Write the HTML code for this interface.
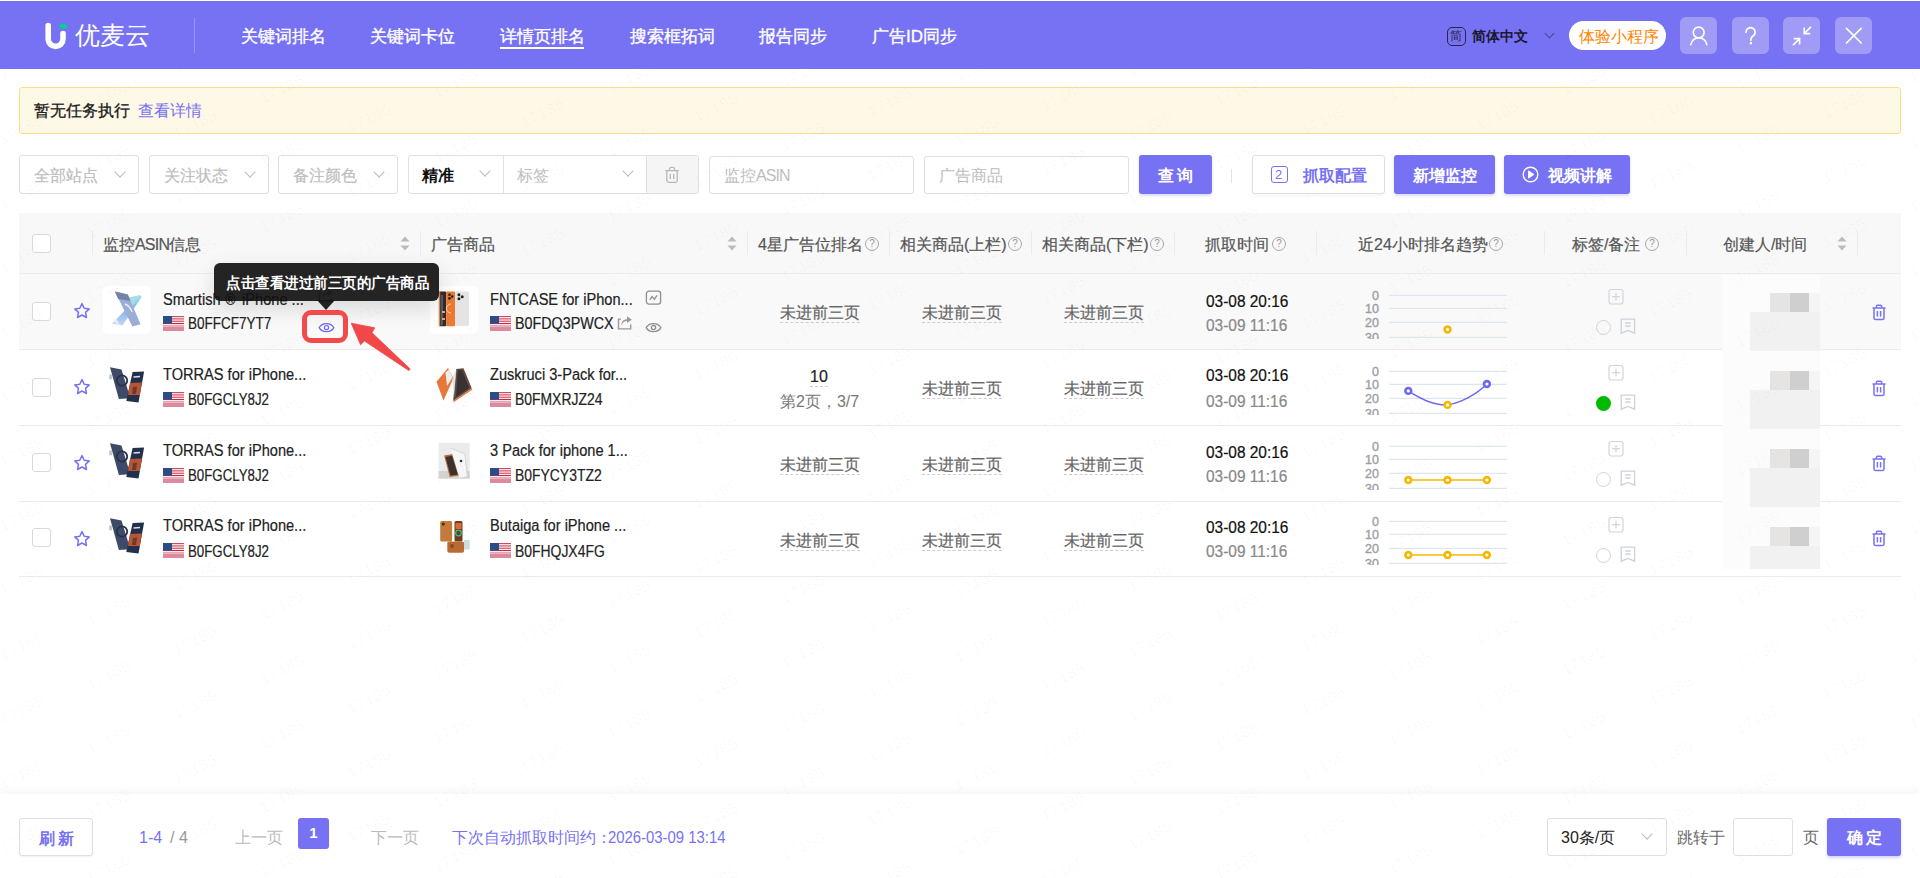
<!DOCTYPE html>
<html><head><meta charset="utf-8">
<style>
*{box-sizing:border-box;margin:0;padding:0}
html,body{width:1920px;height:878px;overflow:hidden;background:#fff}
body{position:relative;font-family:"Liberation Sans",sans-serif;color:#222}
.a{position:absolute;white-space:nowrap}
.rt,.sku,.nt,.d1,.d2,.th,.sel .t{-webkit-text-stroke:0.2px currentColor}
.hdr{position:absolute;left:0;top:1px;width:1920px;height:68px;background:#7772f3}
.nav{position:absolute;top:27px;font-size:17px;line-height:20px;color:#fff;-webkit-text-stroke:0.35px #fff}
.hbtn{position:absolute;top:17px;width:37px;height:37px;border-radius:6px;background:rgba(255,255,255,.3)}
.sel{position:absolute;top:155px;height:39px;border:1px solid #dedee3;border-radius:3px;background:#fff}
.sel .t{position:absolute;left:14px;top:10px;font-size:16px;line-height:20px;color:#bdbdbd}
.chev{position:absolute;width:8px;height:8px;border-right:1px solid #b8bcc4;border-bottom:1px solid #b8bcc4;transform:rotate(45deg)}
.btnp{position:absolute;top:155px;height:39px;background:#7772f3;border-radius:3px;color:#fff;font-size:16px;line-height:20px;font-weight:500}

.th{position:absolute;top:235px;font-size:16px;line-height:20px;color:#555}
.vd{position:absolute;top:231px;width:1px;height:24px;background:#ebebeb}
.q{position:absolute;top:237px;width:14px;height:14px;border:1px solid #a8a8a8;border-radius:50%;font-size:10px;line-height:12px;text-align:center;color:#999;font-family:"Liberation Sans",sans-serif}
.cb{position:absolute;left:32px;width:19px;height:19px;border:1px solid #d9d9d9;border-radius:3px;background:#fff}
.rt{position:absolute;font-size:16px;line-height:20px;color:#222}
.sku{position:absolute;font-size:16px;line-height:20px;color:#222}
.nt{position:absolute;font-size:16px;line-height:18px;color:#666;border-bottom:1px dashed #d8c8d0;padding-bottom:0}
.d1{position:absolute;left:1206px;font-size:16px;line-height:20px;color:#111;transform:scaleX(.965);transform-origin:0 0}
.d2{position:absolute;left:1206px;font-size:16px;line-height:20px;color:#888;transform:scaleX(.965);transform-origin:0 0}
.thumb{position:absolute;width:48px;height:48px;border-radius:5px;background:#fff;overflow:hidden}
</style></head><body>

<!-- HEADER -->
<div class="hdr"></div>
<svg class="a" style="left:40px;top:18px" width="32" height="34" viewBox="0 0 32 34">
  <path d="M8.2 7.5 V21 a7.4 7.4 0 0 0 14.8 0 V15.5" fill="none" stroke="#fff" stroke-width="5.6" stroke-linecap="round"/>
  <path d="M19.2 9.2 a4 3.6 0 0 1 8 0 q0 1.4 -1.4 1.4 h-5.2 q-1.4 0 -1.4 -1.4z" fill="#00d09c"/>
</svg>
<div class="a" style="left:75px;top:20px;font-size:25px;line-height:30px;color:#fff">优麦云</div>
<div class="a" style="left:194px;top:18px;width:1px;height:35px;background:rgba(255,255,255,.25)"></div>
<div class="nav a" style="left:241px">关键词排名</div>
<div class="nav a" style="left:370px">关键词卡位</div>
<div class="nav a" style="left:500px">详情页排名</div>
<div class="a" style="left:500px;top:47px;width:84px;height:2px;background:#fff"></div>
<div class="nav a" style="left:630px">搜索框拓词</div>
<div class="nav a" style="left:759px">报告同步</div>
<div class="nav a" style="left:872px">广告ID同步</div>

<div class="a" style="left:1447px;top:27px;width:19px;height:19px;border:1.5px solid #2a2840;border-radius:5px"></div>
<div class="a" style="left:1450px;top:29px;font-size:12px;line-height:14px;color:#2a2840">简</div>
<div class="a" style="left:1472px;top:27px;font-size:14px;line-height:18px;color:#1a1830;font-weight:700">简体中文</div>
<div class="chev" style="left:1546px;top:30px;width:7px;height:7px;border-color:#4a4690"></div>
<div class="a" style="left:1569px;top:21px;width:97px;height:29px;border-radius:15px;background:#fff"></div>
<div class="a" style="left:1579px;top:27px;font-size:15.6px;line-height:20px;color:#ff8400">体验小程序</div>
<div class="hbtn" style="left:1680px"></div>
<div class="hbtn" style="left:1732px"></div>
<div class="hbtn" style="left:1783px"></div>
<div class="hbtn" style="left:1835px"></div>


<svg class="a" style="left:1680px;top:17px" width="37" height="37" viewBox="0 0 37 37" fill="none" stroke="#fff" stroke-width="1.6" stroke-linecap="round">
  <circle cx="18.7" cy="15.5" r="5.4"/><path d="M10.8 27.6 a8.1 8.1 0 0 1 16 0"/>
</svg>
<svg class="a" style="left:1732px;top:17px" width="37" height="37" viewBox="0 0 37 37" fill="none" stroke="#fff" stroke-width="1.7" stroke-linecap="round">
  <path d="M14 15.2 a4.6 4.6 0 1 1 7 3.9 c-1.5 0.9 -2.1 1.8 -2.1 3.3 v0.9"/><rect x="17.8" y="25" width="2.2" height="2.2" fill="#fff" stroke="none"/>
</svg>
<svg class="a" style="left:1783px;top:17px" width="37" height="37" viewBox="0 0 37 37" fill="none" stroke="#fff" stroke-width="1.6" stroke-linecap="square">
  <path d="M27.4 10.4 L21.2 16.6 M21.2 11.4 V16.6 H26.4"/>
  <path d="M10.6 27.6 L16.6 21.6 M11.6 21.6 H16.6 V26.6"/>
</svg>
<svg class="a" style="left:1835px;top:17px" width="37" height="37" viewBox="0 0 37 37" fill="none" stroke="#fff" stroke-width="1.7" stroke-linecap="round">
  <path d="M11.5 11.3 L26.2 26 M26.2 11.3 L11.5 26"/>
</svg>

<!-- NOTICE -->
<div class="a" style="left:19px;top:87px;width:1882px;height:47px;background:#fef8e6;border:1px solid #fbde88;border-radius:3px"></div>
<div class="a" style="left:34px;top:101px;font-size:16px;line-height:20px;color:#1a1a1a;-webkit-text-stroke:0.3px #1a1a1a">暂无任务执行</div>
<div class="a" style="left:138px;top:101px;font-size:16px;line-height:20px;color:#7772f3">查看详情</div>

<!-- FILTERS -->
<div class="sel" style="left:19px;width:120px"><span class="t">全部站点</span><i class="chev" style="left:96px;top:12px"></i></div>
<div class="sel" style="left:149px;width:120px"><span class="t">关注状态</span><i class="chev" style="left:96px;top:12px"></i></div>
<div class="sel" style="left:278px;width:120px"><span class="t">备注颜色</span><i class="chev" style="left:96px;top:12px"></i></div>


<div class="a" style="left:408px;top:155px;width:291px;height:39px;border:1px solid #dedee3;border-radius:3px;background:#fff;overflow:hidden">
  <div class="a" style="left:237px;top:0;width:53px;height:37px;background:#f5f5f5;border-left:1px solid #dedee3"></div>
  <div class="a" style="left:94px;top:0;width:1px;height:37px;background:#dedee3"></div>
</div>
<div class="a" style="left:422px;top:166px;font-size:16px;line-height:20px;color:#111;font-weight:700">精准</div>
<i class="chev" style="left:481px;top:167px"></i>
<div class="a" style="left:517px;top:166px;font-size:16px;line-height:20px;color:#bdbdbd">标签</div>
<i class="chev" style="left:624px;top:167px"></i>
<svg class="a" style="left:663px;top:166px" width="18" height="18" viewBox="0 0 18 18" fill="none" stroke="#b4b8bf" stroke-width="1.3">
  <path d="M2.2 4.6 H15.8 M6.5 4.4 V3 a1.6 1.6 0 0 1 1.6 -1.6 h1.8 a1.6 1.6 0 0 1 1.6 1.6 V4.4 M3.8 4.8 V14.6 a1.8 1.8 0 0 0 1.8 1.8 h6.8 a1.8 1.8 0 0 0 1.8 -1.8 V4.8 M7.3 8 V13 M10.7 8 V13"/>
</svg>
<div class="a" style="left:709px;top:156px;width:205px;height:38px;border:1px solid #dedee3;border-radius:3px;background:#fff"></div>
<div class="a" style="left:724px;top:166px;font-size:16px;line-height:20px;color:#bdbdbd">监控<span style="letter-spacing:-0.9px">ASIN</span></div>
<div class="a" style="left:924px;top:156px;width:205px;height:38px;border:1px solid #dedee3;border-radius:3px;background:#fff"></div>
<div class="a" style="left:939px;top:166px;font-size:16px;line-height:20px;color:#bdbdbd">广告商品</div>
<div class="btnp a" style="left:1139px;width:73px;box-shadow:0 2px 3px rgba(119,114,243,.25)"></div>
<div class="a" style="left:1158px;top:166px;font-size:16px;line-height:20px;color:#fff;font-weight:700;letter-spacing:3px">查询</div>
<div class="a" style="left:1231px;top:169px;width:1px;height:14px;background:#e4e4e4"></div>
<div class="a" style="left:1252px;top:155px;width:133px;height:39px;border:1px solid #dedee3;border-radius:3px;background:#fff;box-shadow:0 2px 3px rgba(0,0,0,.04)"></div>
<div class="a" style="left:1271px;top:166px;width:17px;height:17px;border:1.3px solid #7772f3;border-radius:3px"></div>
<div class="a" style="left:1275px;top:166px;font-size:13px;line-height:17px;color:#7772f3">2</div>
<div class="a" style="left:1303px;top:166px;font-size:16px;line-height:20px;color:#7772f3;font-weight:700">抓取配置</div>
<div class="btnp a" style="left:1394px;width:101px;box-shadow:0 2px 3px rgba(119,114,243,.25)"></div>
<div class="a" style="left:1413px;top:166px;font-size:16px;line-height:20px;color:#fff;font-weight:700">新增监控</div>
<div class="btnp a" style="left:1504px;width:126px;box-shadow:0 2px 3px rgba(119,114,243,.25)"></div>
<svg class="a" style="left:1522px;top:166px" width="17" height="17" viewBox="0 0 17 17" fill="none" stroke="#fff" stroke-width="1.4">
  <circle cx="8.5" cy="8.5" r="7.3"/><path d="M6.7 5.3 L11.4 8.5 L6.7 11.7 Z" fill="#fff" stroke-linejoin="round"/>
</svg>
<div class="a" style="left:1548px;top:166px;font-size:16px;line-height:20px;color:#fff;font-weight:700">视频讲解</div>


<!-- TABLE HEADER -->
<div class="a" style="left:19px;top:213px;width:1882px;height:61px;background:#f8f8f8;border-bottom:1px solid #ececec"></div>
<div class="cb" style="top:234px"></div>
<div class="vd" style="left:92px"></div>
<div class="th" style="left:103px">监控<span style="letter-spacing:-0.8px">ASIN</span>信息</div>
<svg class="a" style="left:400px;top:236px" width="10" height="15" viewBox="0 0 10 15" fill="#bbb"><path d="M5 0.5 L9.5 5.5 H0.5Z M5 14.5 L9.5 9.5 H0.5Z"/></svg>
<div class="vd" style="left:420px"></div>
<div class="th" style="left:431px">广告商品</div>
<svg class="a" style="left:727px;top:236px" width="10" height="15" viewBox="0 0 10 15" fill="#bbb"><path d="M5 0.5 L9.5 5.5 H0.5Z M5 14.5 L9.5 9.5 H0.5Z"/></svg>
<div class="vd" style="left:747px"></div>
<div class="th" style="left:758px">4星广告位排名</div><div class="q" style="left:865px">?</div>
<div class="vd" style="left:889px"></div>
<div class="th" style="left:900px">相关商品(上栏)</div><div class="q" style="left:1008px">?</div>
<div class="vd" style="left:1031px"></div>
<div class="th" style="left:1042px">相关商品(下栏)</div><div class="q" style="left:1150px">?</div>
<div class="vd" style="left:1174px"></div>
<div class="th" style="left:1205px">抓取时间</div><div class="q" style="left:1272px">?</div>
<div class="vd" style="left:1316px"></div>
<div class="th" style="left:1358px">近24小时排名趋势</div><div class="q" style="left:1489px">?</div>
<div class="vd" style="left:1544px"></div>
<div class="th" style="left:1572px">标签/备注</div><div class="q" style="left:1645px">?</div>
<div class="vd" style="left:1686px"></div>
<div class="th" style="left:1723px">创建人/时间</div>
<svg class="a" style="left:1837px;top:236px" width="10" height="15" viewBox="0 0 10 15" fill="#bbb"><path d="M5 0.5 L9.5 5.5 H0.5Z M5 14.5 L9.5 9.5 H0.5Z"/></svg>
<div class="vd" style="left:1857px"></div>

<!-- ROWS -->
<div class="a" style="left:19px;top:274px;width:1882px;height:75px;background:#f9f9f9"></div>
<div class="a" style="left:19px;top:349px;width:1882px;height:1px;background:#ebebeb"></div>
<div class="cb" style="top:302px"></div>
<svg class="a" style="left:73px;top:302px" width="18" height="18" viewBox="0 0 18 18"><path d="M9 1.6 L11.2 6.3 L16.3 6.9 L12.5 10.4 L13.5 15.5 L9 13 L4.5 15.5 L5.5 10.4 L1.7 6.9 L6.8 6.3 Z" fill="none" stroke="#7772f3" stroke-width="1.5" stroke-linejoin="round"/></svg>
<div class="thumb" style="left:103px;top:286px"></div>
<svg class="a" style="left:103px;top:285px" width="48" height="48" viewBox="0 0 48 48"><defs><linearGradient id="gb" x1="0" y1="0" x2="0" y2="1"><stop offset="0" stop-color="#9fe0e8"/><stop offset=".5" stop-color="#7fb4ec"/><stop offset="1" stop-color="#c8d6f0"/></linearGradient></defs>
        <path d="M37 9.9 L38.6 12 L19.5 40.5 L9.2 38.5 Z" fill="url(#gb)"/><path d="M37 9.9 L26.1 12.5 L20 22 L30 20Z" fill="#a6dde6"/>
        <path d="M11.9 6.6 L24.8 9.5 L37.6 39.3 L29.4 41.6 Z" fill="#9cadd6"/><path d="M11.9 6.6 L24.8 9.5 L27.5 16 L15.2 14 Z" fill="#7283a6"/>
        <path d="M22 19 q5 2 7 8" stroke="#e8eefa" stroke-width="1.4" fill="none"/><path d="M10.5 37 L13 33 L17 40Z" fill="#e6ecf8"/></svg>
<div class="rt" style="left:163px;top:290px;transform:scaleX(.912);transform-origin:0 0">Smartish<span style="display:inline-block;font-size:13px;transform:scale(1.15,1.2) translate(1px,-1px);margin:0 9px 0 5px">®</span>iPhone ...</div>
<svg class="a" style="left:163px;top:316px" width="21" height="15" viewBox="0 0 21 15"><rect width="21" height="15" fill="#fff"/><rect y="0" width="21" height="1.2" fill="#d04a60"/><rect y="2.3" width="21" height="1.2" fill="#d04a60"/><rect y="4.6" width="21" height="1.2" fill="#d04a60"/><rect y="6.9" width="21" height="1.2" fill="#c8283e"/><rect y="9.2" width="21" height="1.2" fill="#e090a0"/><rect y="10.6" width="21" height="4.4" fill="#dc8a9e"/><rect width="9" height="7.6" fill="#2a4d88"/></svg>
<div class="sku" style="left:188px;top:314px;transform:scaleX(0.844);transform-origin:0 0">B0FFCF7YT7</div>
<div class="thumb" style="left:430px;top:286px"></div>
<svg class="a" style="left:430px;top:285px" width="48" height="48" viewBox="0 0 48 48"><rect x="8.9" y="6.6" width="7.3" height="34.7" rx="1" fill="#3a2a22"/><rect x="8.9" y="6.6" width="1.3" height="34.7" fill="#e08a4a"/><rect x="11" y="10" width="2" height="30" fill="#4a8ad0" opacity=".55"/>
        <rect x="12" y="26" width="3" height="2" fill="#e8a070"/><rect x="12" y="33" width="3" height="2" fill="#e8a070"/>
        <rect x="16.2" y="6.6" width="8.9" height="34.7" rx="1" fill="#ec7a30"/><circle cx="19.5" cy="9.8" r="1.3" fill="#222"/><circle cx="22.2" cy="11.6" r="1.3" fill="#222"/><circle cx="19.5" cy="13.4" r="1.3" fill="#222"/>
        <path d="M21 19 a4 4 0 0 0 0 9" stroke="#fbe2d0" stroke-width="0.9" fill="none"/>
        <rect x="25.1" y="6.6" width="13.9" height="34.5" rx="1.5" fill="#e4e4e4"/><circle cx="28.9" cy="9.8" r="1.5" fill="#222"/><circle cx="32.2" cy="11.8" r="1.5" fill="#222"/><circle cx="28.9" cy="13.8" r="1.5" fill="#222"/></svg>
<div class="rt" style="left:490px;top:290px;transform:scaleX(.912);transform-origin:0 0">FNTCASE for iPhon...</div>
<svg class="a" style="left:490px;top:316px" width="21" height="15" viewBox="0 0 21 15"><rect width="21" height="15" fill="#fff"/><rect y="0" width="21" height="1.2" fill="#d04a60"/><rect y="2.3" width="21" height="1.2" fill="#d04a60"/><rect y="4.6" width="21" height="1.2" fill="#d04a60"/><rect y="6.9" width="21" height="1.2" fill="#c8283e"/><rect y="9.2" width="21" height="1.2" fill="#e090a0"/><rect y="10.6" width="21" height="4.4" fill="#dc8a9e"/><rect width="9" height="7.6" fill="#2a4d88"/></svg>
<div class="sku" style="left:515px;top:314px;transform:scaleX(0.894);transform-origin:0 0">B0FDQ3PWCX</div>
<div class="nt" style="left:780px;top:304px">未进前三页</div>
<div class="nt" style="left:922px;top:304px">未进前三页</div>
<div class="nt" style="left:1064px;top:304px">未进前三页</div>
<div class="d1" style="top:292px">03-08 20:16</div>
<div class="d2" style="top:316px">03-09 11:16</div>
<svg class="a" style="left:1360px;top:287px" width="150" height="51.5" viewBox="0 0 150 51.5"><line x1="29" y1="8.3" x2="147" y2="8.3" stroke="#e0e6f1" stroke-width="1.2"/><text x="19" y="12.5" text-anchor="end" font-size="12.5" font-family="Liberation Sans" fill="#9aa0a6" stroke="#9aa0a6" stroke-width="0.35">0</text><line x1="29" y1="21.3" x2="147" y2="21.3" stroke="#e0e6f1" stroke-width="1.2"/><text x="19" y="25.5" text-anchor="end" font-size="12.5" font-family="Liberation Sans" fill="#9aa0a6" stroke="#9aa0a6" stroke-width="0.35">10</text><line x1="29" y1="35.3" x2="147" y2="35.3" stroke="#e0e6f1" stroke-width="1.2"/><text x="19" y="39.5" text-anchor="end" font-size="12.5" font-family="Liberation Sans" fill="#9aa0a6" stroke="#9aa0a6" stroke-width="0.35">20</text><line x1="29" y1="50.3" x2="147" y2="50.3" stroke="#e0e6f1" stroke-width="1.2"/><text x="19" y="54.5" text-anchor="end" font-size="12.5" font-family="Liberation Sans" fill="#9aa0a6" stroke="#9aa0a6" stroke-width="0.35">30</text><circle cx="87.5" cy="42.5" r="2.9" fill="#fff" stroke="#f5b800" stroke-width="2.6"/></svg>
<svg class="a" style="left:1608px;top:288px" width="16" height="17" viewBox="0 0 16 17" fill="none" stroke="#d0d4db" stroke-width="1.2"><rect x="1" y="1.5" width="14" height="14.5" rx="2.5"/><path d="M8 5 V12.5 M4.2 8.7 H11.8"/></svg>
<div class="a" style="left:1596px;top:320px;width:15px;height:15px;border-radius:50%;border:1.6px solid #d0d4db"></div>
<svg class="a" style="left:1620px;top:318px" width="16" height="17" viewBox="0 0 16 17" fill="none" stroke="#cdd1d9" stroke-width="1.3"><path d="M1.2 1.2 H14.6 V15.2 L7.9 12.5 L1.2 15.2 Z M5.2 5 H10.6 M5.2 8 H10.6"/></svg>
<svg class="a" style="left:1871px;top:304px" width="16" height="17" viewBox="0 0 16 17" fill="none" stroke="#7772f3" stroke-width="1.5"><path d="M1.5 4 H14.5 M5.4 3.8 V2.4 a1.1 1.1 0 0 1 1.1 -1.1 h3 a1.1 1.1 0 0 1 1.1 1.1 V3.8 M3 4.2 V14 a1.6 1.6 0 0 0 1.6 1.6 h6.8 a1.6 1.6 0 0 0 1.6 -1.6 V4.2 M6.4 7 V12.6 M9.6 7 V12.6"/></svg>
<div class="a" style="left:19px;top:425px;width:1882px;height:1px;background:#ebebeb"></div>
<div class="cb" style="top:378px"></div>
<svg class="a" style="left:73px;top:378px" width="18" height="18" viewBox="0 0 18 18"><path d="M9 1.6 L11.2 6.3 L16.3 6.9 L12.5 10.4 L13.5 15.5 L9 13 L4.5 15.5 L5.5 10.4 L1.7 6.9 L6.8 6.3 Z" fill="none" stroke="#7772f3" stroke-width="1.5" stroke-linejoin="round"/></svg>
<div class="thumb" style="left:103px;top:362px"></div>
<svg class="a" style="left:103px;top:361px" width="48" height="48" viewBox="0 0 48 48"><path d="M7 6.2 L18.5 8.4 L27.4 37.3 L15.9 38.1 Z" fill="#3e4b68"/><circle cx="19" cy="19.5" r="5.2" fill="none" stroke="#27314a" stroke-width="1.8"/>
        <rect x="6.3" y="13.5" width="2.6" height="4.8" fill="#b8c4cc"/>
        <path d="M29.6 11 L41.1 10.4 L35.5 41.4 L23.3 39.9 Z" fill="#22304c"/><path d="M27 22 L38.8 21.5 L36.8 34 L25 34Z" fill="#b85535"/><path d="M30 26 L34 25.5 L33 33 L29 33Z" fill="#3a2a2a" opacity=".6"/>
        <path d="M30.5 16 L37 15.5" stroke="#dde" stroke-width="1.3"/></svg>
<div class="rt" style="left:163px;top:365px;transform:scaleX(.912);transform-origin:0 0">TORRAS for iPhone...</div>
<svg class="a" style="left:163px;top:392px" width="21" height="15" viewBox="0 0 21 15"><rect width="21" height="15" fill="#fff"/><rect y="0" width="21" height="1.2" fill="#d04a60"/><rect y="2.3" width="21" height="1.2" fill="#d04a60"/><rect y="4.6" width="21" height="1.2" fill="#d04a60"/><rect y="6.9" width="21" height="1.2" fill="#c8283e"/><rect y="9.2" width="21" height="1.2" fill="#e090a0"/><rect y="10.6" width="21" height="4.4" fill="#dc8a9e"/><rect width="9" height="7.6" fill="#2a4d88"/></svg>
<div class="sku" style="left:188px;top:390px;transform:scaleX(0.83);transform-origin:0 0">B0FGCLY8J2</div>
<div class="thumb" style="left:430px;top:362px"></div>
<svg class="a" style="left:430px;top:361px" width="48" height="48" viewBox="0 0 48 48"><path d="M6.5 20.7 L18 7 L23.5 17.3 L13.5 39.6 Z" fill="#e8773a"/><path d="M15.5 11.5 L19 8.5 L22.5 16.5 L17 25Z" fill="#eee"/>
        <path d="M26.1 8 L33.5 7.3 L41.7 27.3 L23.1 39.9 Z" fill="#5a4a42"/><path d="M28 9.5 L32 9 L39 27 L26 36Z" fill="#3a3230"/><path d="M41.7 27.3 L23.1 39.9 L24 41 L42.5 28.5Z" fill="#e8773a"/>
        <path d="M26.5 8 L22 18 L24 36Z" fill="#ddd" opacity=".8"/></svg>
<div class="rt" style="left:490px;top:365px;transform:scaleX(.912);transform-origin:0 0">Zuskruci 3-Pack for...</div>
<svg class="a" style="left:490px;top:392px" width="21" height="15" viewBox="0 0 21 15"><rect width="21" height="15" fill="#fff"/><rect y="0" width="21" height="1.2" fill="#d04a60"/><rect y="2.3" width="21" height="1.2" fill="#d04a60"/><rect y="4.6" width="21" height="1.2" fill="#d04a60"/><rect y="6.9" width="21" height="1.2" fill="#c8283e"/><rect y="9.2" width="21" height="1.2" fill="#e090a0"/><rect y="10.6" width="21" height="4.4" fill="#dc8a9e"/><rect width="9" height="7.6" fill="#2a4d88"/></svg>
<div class="sku" style="left:515px;top:390px;transform:scaleX(0.87);transform-origin:0 0">B0FMXRJZ24</div>
<div class="nt" style="left:810px;top:368px;color:#222">10</div>
<div class="a" style="left:780px;top:392px;font-size:16px;line-height:20px;color:#777">第2页，3/7</div>
<div class="nt" style="left:922px;top:380px">未进前三页</div>
<div class="nt" style="left:1064px;top:380px">未进前三页</div>
<div class="d1" style="top:366px">03-08 20:16</div>
<div class="d2" style="top:392px">03-09 11:16</div>
<svg class="a" style="left:1360px;top:363px" width="150" height="51.5" viewBox="0 0 150 51.5"><line x1="29" y1="8.3" x2="147" y2="8.3" stroke="#e0e6f1" stroke-width="1.2"/><text x="19" y="12.5" text-anchor="end" font-size="12.5" font-family="Liberation Sans" fill="#9aa0a6" stroke="#9aa0a6" stroke-width="0.35">0</text><line x1="29" y1="21.3" x2="147" y2="21.3" stroke="#e0e6f1" stroke-width="1.2"/><text x="19" y="25.5" text-anchor="end" font-size="12.5" font-family="Liberation Sans" fill="#9aa0a6" stroke="#9aa0a6" stroke-width="0.35">10</text><line x1="29" y1="35.3" x2="147" y2="35.3" stroke="#e0e6f1" stroke-width="1.2"/><text x="19" y="39.5" text-anchor="end" font-size="12.5" font-family="Liberation Sans" fill="#9aa0a6" stroke="#9aa0a6" stroke-width="0.35">20</text><line x1="29" y1="50.3" x2="147" y2="50.3" stroke="#e0e6f1" stroke-width="1.2"/><text x="19" y="54.5" text-anchor="end" font-size="12.5" font-family="Liberation Sans" fill="#9aa0a6" stroke="#9aa0a6" stroke-width="0.35">30</text><path d="M48.3 27.9 C 62 37, 76 42.5, 87.5 41.9 C 100 40, 116 32, 126.9 21" fill="none" stroke="#6e66f0" stroke-width="1.5"/><circle cx="48.3" cy="27.9" r="2.9" fill="#fff" stroke="#6e66f0" stroke-width="2.6"/><circle cx="87.5" cy="41.9" r="2.9" fill="#fff" stroke="#f5b800" stroke-width="2.6"/><circle cx="126.9" cy="21" r="2.9" fill="#fff" stroke="#6e66f0" stroke-width="2.6"/></svg>
<svg class="a" style="left:1608px;top:364px" width="16" height="17" viewBox="0 0 16 17" fill="none" stroke="#d0d4db" stroke-width="1.2"><rect x="1" y="1.5" width="14" height="14.5" rx="2.5"/><path d="M8 5 V12.5 M4.2 8.7 H11.8"/></svg>
<div class="a" style="left:1596px;top:396px;width:15px;height:15px;border-radius:50%;background:#00bb00"></div>
<svg class="a" style="left:1620px;top:394px" width="16" height="17" viewBox="0 0 16 17" fill="none" stroke="#cdd1d9" stroke-width="1.3"><path d="M1.2 1.2 H14.6 V15.2 L7.9 12.5 L1.2 15.2 Z M5.2 5 H10.6 M5.2 8 H10.6"/></svg>
<svg class="a" style="left:1871px;top:380px" width="16" height="17" viewBox="0 0 16 17" fill="none" stroke="#7772f3" stroke-width="1.5"><path d="M1.5 4 H14.5 M5.4 3.8 V2.4 a1.1 1.1 0 0 1 1.1 -1.1 h3 a1.1 1.1 0 0 1 1.1 1.1 V3.8 M3 4.2 V14 a1.6 1.6 0 0 0 1.6 1.6 h6.8 a1.6 1.6 0 0 0 1.6 -1.6 V4.2 M6.4 7 V12.6 M9.6 7 V12.6"/></svg>
<div class="a" style="left:19px;top:501px;width:1882px;height:1px;background:#ebebeb"></div>
<div class="cb" style="top:453px"></div>
<svg class="a" style="left:73px;top:454px" width="18" height="18" viewBox="0 0 18 18"><path d="M9 1.6 L11.2 6.3 L16.3 6.9 L12.5 10.4 L13.5 15.5 L9 13 L4.5 15.5 L5.5 10.4 L1.7 6.9 L6.8 6.3 Z" fill="none" stroke="#7772f3" stroke-width="1.5" stroke-linejoin="round"/></svg>
<div class="thumb" style="left:103px;top:437px"></div>
<svg class="a" style="left:103px;top:437px" width="48" height="48" viewBox="0 0 48 48"><path d="M7 6.2 L18.5 8.4 L27.4 37.3 L15.9 38.1 Z" fill="#3e4b68"/><circle cx="19" cy="19.5" r="5.2" fill="none" stroke="#27314a" stroke-width="1.8"/>
        <rect x="6.3" y="13.5" width="2.6" height="4.8" fill="#b8c4cc"/>
        <path d="M29.6 11 L41.1 10.4 L35.5 41.4 L23.3 39.9 Z" fill="#22304c"/><path d="M27 22 L38.8 21.5 L36.8 34 L25 34Z" fill="#b85535"/><path d="M30 26 L34 25.5 L33 33 L29 33Z" fill="#3a2a2a" opacity=".6"/>
        <path d="M30.5 16 L37 15.5" stroke="#dde" stroke-width="1.3"/></svg>
<div class="rt" style="left:163px;top:441px;transform:scaleX(.912);transform-origin:0 0">TORRAS for iPhone...</div>
<svg class="a" style="left:163px;top:468px" width="21" height="15" viewBox="0 0 21 15"><rect width="21" height="15" fill="#fff"/><rect y="0" width="21" height="1.2" fill="#d04a60"/><rect y="2.3" width="21" height="1.2" fill="#d04a60"/><rect y="4.6" width="21" height="1.2" fill="#d04a60"/><rect y="6.9" width="21" height="1.2" fill="#c8283e"/><rect y="9.2" width="21" height="1.2" fill="#e090a0"/><rect y="10.6" width="21" height="4.4" fill="#dc8a9e"/><rect width="9" height="7.6" fill="#2a4d88"/></svg>
<div class="sku" style="left:188px;top:466px;transform:scaleX(0.83);transform-origin:0 0">B0FGCLY8J2</div>
<div class="thumb" style="left:430px;top:437px"></div>
<svg class="a" style="left:430px;top:437px" width="48" height="48" viewBox="0 0 48 48"><rect x="8.6" y="5.8" width="31.1" height="35.8" fill="#ebebeb"/><rect x="8.6" y="34" width="31.1" height="7.6" fill="#d6d2d0"/>
        <path d="M14.1 18.5 L22.9 16.9 L29.3 38.5 L19.7 40 Z" fill="#b86a38"/><path d="M15.5 20 L22 18.8 L27.8 37.5 L20.5 38.6Z" fill="#3a3230"/>
        <path d="M20.5 11.3 L34.9 16.9 L37.3 39.3 L29.3 40.8 Z" fill="#f6f6f6"/><path d="M20.5 11.3 L34.9 16.9 L37.3 39.3" fill="none" stroke="#cfcfcf" stroke-width=".8"/>
        <circle cx="31" cy="24" r="1.3" fill="#333"/></svg>
<div class="rt" style="left:490px;top:441px;transform:scaleX(.912);transform-origin:0 0">3 Pack for iphone 1...</div>
<svg class="a" style="left:490px;top:468px" width="21" height="15" viewBox="0 0 21 15"><rect width="21" height="15" fill="#fff"/><rect y="0" width="21" height="1.2" fill="#d04a60"/><rect y="2.3" width="21" height="1.2" fill="#d04a60"/><rect y="4.6" width="21" height="1.2" fill="#d04a60"/><rect y="6.9" width="21" height="1.2" fill="#c8283e"/><rect y="9.2" width="21" height="1.2" fill="#e090a0"/><rect y="10.6" width="21" height="4.4" fill="#dc8a9e"/><rect width="9" height="7.6" fill="#2a4d88"/></svg>
<div class="sku" style="left:515px;top:466px;transform:scaleX(0.87);transform-origin:0 0">B0FYCY3TZ2</div>
<div class="nt" style="left:780px;top:456px">未进前三页</div>
<div class="nt" style="left:922px;top:456px">未进前三页</div>
<div class="nt" style="left:1064px;top:456px">未进前三页</div>
<div class="d1" style="top:443px">03-08 20:16</div>
<div class="d2" style="top:467px">03-09 11:16</div>
<svg class="a" style="left:1360px;top:438px" width="150" height="51.5" viewBox="0 0 150 51.5"><line x1="29" y1="8.3" x2="147" y2="8.3" stroke="#e0e6f1" stroke-width="1.2"/><text x="19" y="12.5" text-anchor="end" font-size="12.5" font-family="Liberation Sans" fill="#9aa0a6" stroke="#9aa0a6" stroke-width="0.35">0</text><line x1="29" y1="21.3" x2="147" y2="21.3" stroke="#e0e6f1" stroke-width="1.2"/><text x="19" y="25.5" text-anchor="end" font-size="12.5" font-family="Liberation Sans" fill="#9aa0a6" stroke="#9aa0a6" stroke-width="0.35">10</text><line x1="29" y1="35.3" x2="147" y2="35.3" stroke="#e0e6f1" stroke-width="1.2"/><text x="19" y="39.5" text-anchor="end" font-size="12.5" font-family="Liberation Sans" fill="#9aa0a6" stroke="#9aa0a6" stroke-width="0.35">20</text><line x1="29" y1="50.3" x2="147" y2="50.3" stroke="#e0e6f1" stroke-width="1.2"/><text x="19" y="54.5" text-anchor="end" font-size="12.5" font-family="Liberation Sans" fill="#9aa0a6" stroke="#9aa0a6" stroke-width="0.35">30</text><line x1="48.3" y1="42" x2="126.9" y2="42" stroke="#f5b800" stroke-width="1.6"/><circle cx="48.3" cy="42" r="2.9" fill="#fff" stroke="#f5b800" stroke-width="2.6"/><circle cx="87.5" cy="42" r="2.9" fill="#fff" stroke="#f5b800" stroke-width="2.6"/><circle cx="126.9" cy="42" r="2.9" fill="#fff" stroke="#f5b800" stroke-width="2.6"/></svg>
<svg class="a" style="left:1608px;top:440px" width="16" height="17" viewBox="0 0 16 17" fill="none" stroke="#d0d4db" stroke-width="1.2"><rect x="1" y="1.5" width="14" height="14.5" rx="2.5"/><path d="M8 5 V12.5 M4.2 8.7 H11.8"/></svg>
<div class="a" style="left:1596px;top:472px;width:15px;height:15px;border-radius:50%;border:1.6px solid #d0d4db"></div>
<svg class="a" style="left:1620px;top:470px" width="16" height="17" viewBox="0 0 16 17" fill="none" stroke="#cdd1d9" stroke-width="1.3"><path d="M1.2 1.2 H14.6 V15.2 L7.9 12.5 L1.2 15.2 Z M5.2 5 H10.6 M5.2 8 H10.6"/></svg>
<svg class="a" style="left:1871px;top:455px" width="16" height="17" viewBox="0 0 16 17" fill="none" stroke="#7772f3" stroke-width="1.5"><path d="M1.5 4 H14.5 M5.4 3.8 V2.4 a1.1 1.1 0 0 1 1.1 -1.1 h3 a1.1 1.1 0 0 1 1.1 1.1 V3.8 M3 4.2 V14 a1.6 1.6 0 0 0 1.6 1.6 h6.8 a1.6 1.6 0 0 0 1.6 -1.6 V4.2 M6.4 7 V12.6 M9.6 7 V12.6"/></svg>
<div class="a" style="left:19px;top:576px;width:1882px;height:1px;background:#ebebeb"></div>
<div class="cb" style="top:528px"></div>
<svg class="a" style="left:73px;top:530px" width="18" height="18" viewBox="0 0 18 18"><path d="M9 1.6 L11.2 6.3 L16.3 6.9 L12.5 10.4 L13.5 15.5 L9 13 L4.5 15.5 L5.5 10.4 L1.7 6.9 L6.8 6.3 Z" fill="none" stroke="#7772f3" stroke-width="1.5" stroke-linejoin="round"/></svg>
<div class="thumb" style="left:103px;top:512px"></div>
<svg class="a" style="left:103px;top:512px" width="48" height="48" viewBox="0 0 48 48"><path d="M7 6.2 L18.5 8.4 L27.4 37.3 L15.9 38.1 Z" fill="#3e4b68"/><circle cx="19" cy="19.5" r="5.2" fill="none" stroke="#27314a" stroke-width="1.8"/>
        <rect x="6.3" y="13.5" width="2.6" height="4.8" fill="#b8c4cc"/>
        <path d="M29.6 11 L41.1 10.4 L35.5 41.4 L23.3 39.9 Z" fill="#22304c"/><path d="M27 22 L38.8 21.5 L36.8 34 L25 34Z" fill="#b85535"/><path d="M30 26 L34 25.5 L33 33 L29 33Z" fill="#3a2a2a" opacity=".6"/>
        <path d="M30.5 16 L37 15.5" stroke="#dde" stroke-width="1.3"/></svg>
<div class="rt" style="left:163px;top:516px;transform:scaleX(.912);transform-origin:0 0">TORRAS for iPhone...</div>
<svg class="a" style="left:163px;top:543px" width="21" height="15" viewBox="0 0 21 15"><rect width="21" height="15" fill="#fff"/><rect y="0" width="21" height="1.2" fill="#d04a60"/><rect y="2.3" width="21" height="1.2" fill="#d04a60"/><rect y="4.6" width="21" height="1.2" fill="#d04a60"/><rect y="6.9" width="21" height="1.2" fill="#c8283e"/><rect y="9.2" width="21" height="1.2" fill="#e090a0"/><rect y="10.6" width="21" height="4.4" fill="#dc8a9e"/><rect width="9" height="7.6" fill="#2a4d88"/></svg>
<div class="sku" style="left:188px;top:542px;transform:scaleX(0.83);transform-origin:0 0">B0FGCLY8J2</div>
<div class="thumb" style="left:430px;top:512px"></div>
<svg class="a" style="left:430px;top:512px" width="48" height="48" viewBox="0 0 48 48"><rect x="10.2" y="8.9" width="11.9" height="20.7" rx="1.5" fill="#c47a3a"/><circle cx="13.3" cy="12" r="1.6" fill="#4a3020"/>
        <rect x="24.5" y="8.9" width="8" height="20.7" rx="1.5" fill="#6a3e22"/><rect x="25.5" y="11" width="6" height="6" fill="#d86a3a"/><circle cx="28.5" cy="21" r="2.8" fill="none" stroke="#40c080" stroke-width="1.2"/>
        <rect x="17.3" y="29.6" width="16.8" height="11.2" rx="2" fill="#b86a32"/><circle cx="22" cy="34" r="2" fill="#8a4a20"/>
        <rect x="34" y="28" width="5.7" height="9.6" rx="1" fill="#cdd"/></svg>
<div class="rt" style="left:490px;top:516px;transform:scaleX(.912);transform-origin:0 0">Butaiga for iPhone ...</div>
<svg class="a" style="left:490px;top:543px" width="21" height="15" viewBox="0 0 21 15"><rect width="21" height="15" fill="#fff"/><rect y="0" width="21" height="1.2" fill="#d04a60"/><rect y="2.3" width="21" height="1.2" fill="#d04a60"/><rect y="4.6" width="21" height="1.2" fill="#d04a60"/><rect y="6.9" width="21" height="1.2" fill="#c8283e"/><rect y="9.2" width="21" height="1.2" fill="#e090a0"/><rect y="10.6" width="21" height="4.4" fill="#dc8a9e"/><rect width="9" height="7.6" fill="#2a4d88"/></svg>
<div class="sku" style="left:515px;top:542px;transform:scaleX(0.87);transform-origin:0 0">B0FHQJX4FG</div>
<div class="nt" style="left:780px;top:532px">未进前三页</div>
<div class="nt" style="left:922px;top:532px">未进前三页</div>
<div class="nt" style="left:1064px;top:532px">未进前三页</div>
<div class="d1" style="top:518px">03-08 20:16</div>
<div class="d2" style="top:542px">03-09 11:16</div>
<svg class="a" style="left:1360px;top:513px" width="150" height="51.5" viewBox="0 0 150 51.5"><line x1="29" y1="8.3" x2="147" y2="8.3" stroke="#e0e6f1" stroke-width="1.2"/><text x="19" y="12.5" text-anchor="end" font-size="12.5" font-family="Liberation Sans" fill="#9aa0a6" stroke="#9aa0a6" stroke-width="0.35">0</text><line x1="29" y1="21.3" x2="147" y2="21.3" stroke="#e0e6f1" stroke-width="1.2"/><text x="19" y="25.5" text-anchor="end" font-size="12.5" font-family="Liberation Sans" fill="#9aa0a6" stroke="#9aa0a6" stroke-width="0.35">10</text><line x1="29" y1="35.3" x2="147" y2="35.3" stroke="#e0e6f1" stroke-width="1.2"/><text x="19" y="39.5" text-anchor="end" font-size="12.5" font-family="Liberation Sans" fill="#9aa0a6" stroke="#9aa0a6" stroke-width="0.35">20</text><line x1="29" y1="50.3" x2="147" y2="50.3" stroke="#e0e6f1" stroke-width="1.2"/><text x="19" y="54.5" text-anchor="end" font-size="12.5" font-family="Liberation Sans" fill="#9aa0a6" stroke="#9aa0a6" stroke-width="0.35">30</text><line x1="48.3" y1="42" x2="126.9" y2="42" stroke="#f5b800" stroke-width="1.6"/><circle cx="48.3" cy="42" r="2.9" fill="#fff" stroke="#f5b800" stroke-width="2.6"/><circle cx="87.5" cy="42" r="2.9" fill="#fff" stroke="#f5b800" stroke-width="2.6"/><circle cx="126.9" cy="42" r="2.9" fill="#fff" stroke="#f5b800" stroke-width="2.6"/></svg>
<svg class="a" style="left:1608px;top:516px" width="16" height="17" viewBox="0 0 16 17" fill="none" stroke="#d0d4db" stroke-width="1.2"><rect x="1" y="1.5" width="14" height="14.5" rx="2.5"/><path d="M8 5 V12.5 M4.2 8.7 H11.8"/></svg>
<div class="a" style="left:1596px;top:548px;width:15px;height:15px;border-radius:50%;border:1.6px solid #d0d4db"></div>
<svg class="a" style="left:1620px;top:546px" width="16" height="17" viewBox="0 0 16 17" fill="none" stroke="#cdd1d9" stroke-width="1.3"><path d="M1.2 1.2 H14.6 V15.2 L7.9 12.5 L1.2 15.2 Z M5.2 5 H10.6 M5.2 8 H10.6"/></svg>
<svg class="a" style="left:1871px;top:530px" width="16" height="17" viewBox="0 0 16 17" fill="none" stroke="#7772f3" stroke-width="1.5"><path d="M1.5 4 H14.5 M5.4 3.8 V2.4 a1.1 1.1 0 0 1 1.1 -1.1 h3 a1.1 1.1 0 0 1 1.1 1.1 V3.8 M3 4.2 V14 a1.6 1.6 0 0 0 1.6 1.6 h6.8 a1.6 1.6 0 0 0 1.6 -1.6 V4.2 M6.4 7 V12.6 M9.6 7 V12.6"/></svg>
<!-- /ROWS -->

<!-- MOSAIC -->
<div class="a" style="left:1722px;top:275px;width:98px;height:294px;background:#fcfcfc"></div>
<div class="a" style="left:1770px;top:292.5px;width:19.5px;height:19.5px;background:#e5e4e2"></div>
<div class="a" style="left:1789.5px;top:292.5px;width:19.5px;height:19.5px;background:#cfcfcf"></div>
<div class="a" style="left:1809px;top:292.5px;width:11px;height:19.5px;background:#f5f5f5"></div>
<div class="a" style="left:1750px;top:312.0px;width:70px;height:39.0px;background:#f1f1f1"></div>
<div class="a" style="left:1770px;top:370.5px;width:19.5px;height:19.5px;background:#e5e4e2"></div>
<div class="a" style="left:1789.5px;top:370.5px;width:19.5px;height:19.5px;background:#cfcfcf"></div>
<div class="a" style="left:1809px;top:370.5px;width:11px;height:19.5px;background:#f5f5f5"></div>
<div class="a" style="left:1750px;top:390.0px;width:70px;height:39.0px;background:#f1f1f1"></div>
<div class="a" style="left:1770px;top:448.5px;width:19.5px;height:19.5px;background:#e5e4e2"></div>
<div class="a" style="left:1789.5px;top:448.5px;width:19.5px;height:19.5px;background:#cfcfcf"></div>
<div class="a" style="left:1809px;top:448.5px;width:11px;height:19.5px;background:#f5f5f5"></div>
<div class="a" style="left:1750px;top:468.0px;width:70px;height:39.0px;background:#f1f1f1"></div>
<div class="a" style="left:1770px;top:526.5px;width:19.5px;height:19.5px;background:#e5e4e2"></div>
<div class="a" style="left:1789.5px;top:526.5px;width:19.5px;height:19.5px;background:#cfcfcf"></div>
<div class="a" style="left:1809px;top:526.5px;width:11px;height:19.5px;background:#f5f5f5"></div>
<div class="a" style="left:1750px;top:546.0px;width:70px;height:22.7px;background:#f1f1f1"></div>
<!-- ROW1 ICONS -->
<svg class="a" style="left:318px;top:288px" width="16" height="15" viewBox="0 0 16 15"><path d="M4 4.1 H1.5 V13.9 H13.7 V9.4" fill="none" stroke="#999" stroke-width="1.4"/><path d="M4.3 10.2 C4.5 6.5 6.8 4.3 10 4.3 V1.3 L14.8 4.7 L10 8 V6 C7.6 6 5.6 7.5 4.3 10.2 Z" fill="#999"/></svg>
<svg class="a" style="left:645px;top:290px" width="17" height="15" viewBox="0 0 17 15" fill="none" stroke="#8e8e8e" stroke-width="1.3"><rect x="1.4" y="1.1" width="14.2" height="13" rx="2.6"/><path d="M4.8 10 L7 6.6 L9.4 9.2 L12 5.4"/></svg>
<svg class="a" style="left:617px;top:315px" width="16" height="15" viewBox="0 0 16 15"><path d="M4 4.1 H1.5 V13.9 H13.7 V9.4" fill="none" stroke="#999" stroke-width="1.4"/><path d="M4.3 10.2 C4.5 6.5 6.8 4.3 10 4.3 V1.3 L14.8 4.7 L10 8 V6 C7.6 6 5.6 7.5 4.3 10.2 Z" fill="#999"/></svg>
<svg class="a" style="left:645px;top:321px" width="17" height="13" viewBox="0 0 17 13" fill="none" stroke="#8e8e8e" stroke-width="1.3"><path d="M1.2 6.6 C4 1.3 13 1.3 15.8 6.6 C13 11.9 4 11.9 1.2 6.6Z"/><circle cx="8.5" cy="6.6" r="2.1"/></svg>
<svg class="a" style="left:318px;top:321px" width="17" height="13" viewBox="0 0 17 13" fill="none" stroke="#6e66f0" stroke-width="1.2"><path d="M1.2 6.6 C4 1.3 13 1.3 15.8 6.6 C13 11.9 4 11.9 1.2 6.6Z"/><circle cx="8.5" cy="6.6" r="2.1"/></svg>

<!-- TOOLTIP -->
<div class="a" style="left:214px;top:263px;width:225px;height:38px;border-radius:6px;background:rgba(17,17,17,.92);box-shadow:0 8px 22px rgba(0,0,0,.13)"></div>
<svg class="a" style="left:317px;top:300px" width="18" height="10" viewBox="0 0 18 10"><path d="M0 0 H18 L9 10 Z" fill="rgba(17,17,17,.92)"/></svg>
<div class="a" style="left:226px;top:273px;font-size:14.5px;transform:scaleX(.967);transform-origin:0 0;line-height:20px;color:#fff;font-weight:700">点击查看进过前三页的广告商品</div>

<!-- RED BOX + ARROW -->
<div class="a" style="left:302px;top:310px;width:46px;height:33px;border:5.5px solid #f24a4a;border-radius:9px"></div>
<svg class="a" style="left:340px;top:315px" width="80" height="60" viewBox="0 0 80 60">
  <path d="M11.2 8.2 L34.7 12.8 L32 17.8 L70.2 54 L68.8 55.6 L24.5 26 L20.6 29.8 Z" fill="#f04848" stroke="#f04848" stroke-width="0.8" stroke-linejoin="round"/>
</svg>

<!-- FOOTER -->
<div class="a" style="left:0;top:794px;width:1920px;height:84px;background:#fff;box-shadow:0 -3px 8px rgba(0,0,0,.04)"></div>
<div class="a" style="left:19px;top:818px;width:74px;height:38px;border:1px solid #dedee3;border-radius:3px;background:#fff;box-shadow:0 1px 2px rgba(0,0,0,.05)"></div>
<div class="a" style="left:39px;top:829px;font-size:16px;line-height:20px;color:#7772f3;font-weight:700;letter-spacing:3px">刷新</div>
<div class="a" style="left:139px;top:828px;font-size:16px;line-height:20px;color:#7772f3">1-4</div>
<div class="a" style="left:170px;top:828px;font-size:16px;line-height:20px;color:#999">/ 4</div>
<div class="a" style="left:235px;top:828px;font-size:16px;line-height:20px;color:#bbb">上一页</div>
<div class="a" style="left:298px;top:818px;width:31px;height:31px;border-radius:3px;background:#7772f3"></div>
<div class="a" style="left:298px;top:823px;width:31px;font-size:15px;line-height:20px;color:#fff;font-weight:700;text-align:center">1</div>
<div class="a" style="left:371px;top:828px;font-size:16px;line-height:20px;color:#bbb">下一页</div>
<div class="a" style="left:452px;top:828px;font-size:16px;line-height:20px;color:#7772f3">下次自动抓取时间约：</div><div class="a" style="left:608px;top:828px;font-size:16px;line-height:20px;color:#7772f3;transform:scaleX(.93);transform-origin:0 0">2026-03-09 13:14</div>
<div class="a" style="left:1547px;top:818px;width:120px;height:38px;border:1px solid #dedee3;border-radius:3px;background:#fff"></div>
<div class="a" style="left:1561px;top:828px;font-size:16px;line-height:20px;color:#222">30条/页</div>
<i class="chev" style="left:1643px;top:830px"></i>
<div class="a" style="left:1677px;top:828px;font-size:16px;line-height:20px;color:#666">跳转于</div>
<div class="a" style="left:1733px;top:818px;width:60px;height:38px;border:1px solid #dedee3;border-radius:3px;background:#fff"></div>
<div class="a" style="left:1803px;top:828px;font-size:16px;line-height:20px;color:#666">页</div>
<div class="a" style="left:1827px;top:818px;width:74px;height:38px;border-radius:3px;background:#7772f3;box-shadow:0 2px 3px rgba(119,114,243,.3)"></div>
<div class="a" style="left:1847px;top:828px;font-size:16px;line-height:20px;color:#fff;font-weight:700;letter-spacing:3px">确定</div>

<!-- WATERMARK -->
<svg class="a" style="left:0;top:69px;pointer-events:none" width="1920" height="809" viewBox="0 69 1920 809">
<defs><g id="wm"><text transform="rotate(-26.5)" x="0" y="6" text-anchor="middle" font-family="Liberation Mono" font-size="16" fill="#000" fill-opacity="0.032">17185</text></g></defs>
<use href="#wm" transform="translate(20.9 0.0)"/><use href="#wm" transform="translate(20.9 64.5)"/><use href="#wm" transform="translate(20.9 129.0)"/><use href="#wm" transform="translate(20.9 193.5)"/><use href="#wm" transform="translate(20.9 258.0)"/><use href="#wm" transform="translate(20.9 322.5)"/><use href="#wm" transform="translate(20.9 387.0)"/><use href="#wm" transform="translate(20.9 451.5)"/><use href="#wm" transform="translate(20.9 516.0)"/><use href="#wm" transform="translate(20.9 580.5)"/><use href="#wm" transform="translate(20.9 645.0)"/><use href="#wm" transform="translate(20.9 709.5)"/><use href="#wm" transform="translate(20.9 774.0)"/><use href="#wm" transform="translate(20.9 838.5)"/><use href="#wm" transform="translate(20.9 903.0)"/><use href="#wm" transform="translate(107.7 -35.0)"/><use href="#wm" transform="translate(194.5 -5.5)"/><use href="#wm" transform="translate(107.7 29.5)"/><use href="#wm" transform="translate(194.5 59.0)"/><use href="#wm" transform="translate(107.7 94.0)"/><use href="#wm" transform="translate(194.5 123.5)"/><use href="#wm" transform="translate(107.7 158.5)"/><use href="#wm" transform="translate(194.5 188.0)"/><use href="#wm" transform="translate(107.7 223.0)"/><use href="#wm" transform="translate(194.5 252.5)"/><use href="#wm" transform="translate(107.7 287.5)"/><use href="#wm" transform="translate(194.5 317.0)"/><use href="#wm" transform="translate(107.7 352.0)"/><use href="#wm" transform="translate(194.5 381.5)"/><use href="#wm" transform="translate(107.7 416.5)"/><use href="#wm" transform="translate(194.5 446.0)"/><use href="#wm" transform="translate(107.7 481.0)"/><use href="#wm" transform="translate(194.5 510.5)"/><use href="#wm" transform="translate(107.7 545.5)"/><use href="#wm" transform="translate(194.5 575.0)"/><use href="#wm" transform="translate(107.7 610.0)"/><use href="#wm" transform="translate(194.5 639.5)"/><use href="#wm" transform="translate(107.7 674.5)"/><use href="#wm" transform="translate(194.5 704.0)"/><use href="#wm" transform="translate(107.7 739.0)"/><use href="#wm" transform="translate(194.5 768.5)"/><use href="#wm" transform="translate(107.7 803.5)"/><use href="#wm" transform="translate(194.5 833.0)"/><use href="#wm" transform="translate(107.7 868.0)"/><use href="#wm" transform="translate(194.5 897.5)"/><use href="#wm" transform="translate(368.1 -11.0)"/><use href="#wm" transform="translate(281.3 24.0)"/><use href="#wm" transform="translate(368.1 53.5)"/><use href="#wm" transform="translate(281.3 88.5)"/><use href="#wm" transform="translate(368.1 118.0)"/><use href="#wm" transform="translate(281.3 153.0)"/><use href="#wm" transform="translate(368.1 182.5)"/><use href="#wm" transform="translate(281.3 217.5)"/><use href="#wm" transform="translate(368.1 247.0)"/><use href="#wm" transform="translate(281.3 282.0)"/><use href="#wm" transform="translate(368.1 311.5)"/><use href="#wm" transform="translate(281.3 346.5)"/><use href="#wm" transform="translate(368.1 376.0)"/><use href="#wm" transform="translate(281.3 411.0)"/><use href="#wm" transform="translate(368.1 440.5)"/><use href="#wm" transform="translate(281.3 475.5)"/><use href="#wm" transform="translate(368.1 505.0)"/><use href="#wm" transform="translate(281.3 540.0)"/><use href="#wm" transform="translate(368.1 569.5)"/><use href="#wm" transform="translate(281.3 604.5)"/><use href="#wm" transform="translate(368.1 634.0)"/><use href="#wm" transform="translate(281.3 669.0)"/><use href="#wm" transform="translate(368.1 698.5)"/><use href="#wm" transform="translate(281.3 733.5)"/><use href="#wm" transform="translate(368.1 763.0)"/><use href="#wm" transform="translate(281.3 798.0)"/><use href="#wm" transform="translate(368.1 827.5)"/><use href="#wm" transform="translate(281.3 862.5)"/><use href="#wm" transform="translate(368.1 892.0)"/><use href="#wm" transform="translate(541.7 -16.5)"/><use href="#wm" transform="translate(454.9 18.5)"/><use href="#wm" transform="translate(541.7 48.0)"/><use href="#wm" transform="translate(454.9 83.0)"/><use href="#wm" transform="translate(541.7 112.5)"/><use href="#wm" transform="translate(454.9 147.5)"/><use href="#wm" transform="translate(541.7 177.0)"/><use href="#wm" transform="translate(454.9 212.0)"/><use href="#wm" transform="translate(541.7 241.5)"/><use href="#wm" transform="translate(454.9 276.5)"/><use href="#wm" transform="translate(541.7 306.0)"/><use href="#wm" transform="translate(454.9 341.0)"/><use href="#wm" transform="translate(541.7 370.5)"/><use href="#wm" transform="translate(454.9 405.5)"/><use href="#wm" transform="translate(541.7 435.0)"/><use href="#wm" transform="translate(454.9 470.0)"/><use href="#wm" transform="translate(541.7 499.5)"/><use href="#wm" transform="translate(454.9 534.5)"/><use href="#wm" transform="translate(541.7 564.0)"/><use href="#wm" transform="translate(454.9 599.0)"/><use href="#wm" transform="translate(541.7 628.5)"/><use href="#wm" transform="translate(454.9 663.5)"/><use href="#wm" transform="translate(541.7 693.0)"/><use href="#wm" transform="translate(454.9 728.0)"/><use href="#wm" transform="translate(541.7 757.5)"/><use href="#wm" transform="translate(454.9 792.5)"/><use href="#wm" transform="translate(541.7 822.0)"/><use href="#wm" transform="translate(454.9 857.0)"/><use href="#wm" transform="translate(541.7 886.5)"/><use href="#wm" transform="translate(715.3 -22.0)"/><use href="#wm" transform="translate(628.5 13.0)"/><use href="#wm" transform="translate(715.3 42.5)"/><use href="#wm" transform="translate(628.5 77.5)"/><use href="#wm" transform="translate(715.3 107.0)"/><use href="#wm" transform="translate(628.5 142.0)"/><use href="#wm" transform="translate(715.3 171.5)"/><use href="#wm" transform="translate(628.5 206.5)"/><use href="#wm" transform="translate(715.3 236.0)"/><use href="#wm" transform="translate(628.5 271.0)"/><use href="#wm" transform="translate(715.3 300.5)"/><use href="#wm" transform="translate(628.5 335.5)"/><use href="#wm" transform="translate(715.3 365.0)"/><use href="#wm" transform="translate(628.5 400.0)"/><use href="#wm" transform="translate(715.3 429.5)"/><use href="#wm" transform="translate(628.5 464.5)"/><use href="#wm" transform="translate(715.3 494.0)"/><use href="#wm" transform="translate(628.5 529.0)"/><use href="#wm" transform="translate(715.3 558.5)"/><use href="#wm" transform="translate(628.5 593.5)"/><use href="#wm" transform="translate(715.3 623.0)"/><use href="#wm" transform="translate(628.5 658.0)"/><use href="#wm" transform="translate(715.3 687.5)"/><use href="#wm" transform="translate(628.5 722.5)"/><use href="#wm" transform="translate(715.3 752.0)"/><use href="#wm" transform="translate(628.5 787.0)"/><use href="#wm" transform="translate(715.3 816.5)"/><use href="#wm" transform="translate(628.5 851.5)"/><use href="#wm" transform="translate(715.3 881.0)"/><use href="#wm" transform="translate(628.5 916.0)"/><use href="#wm" transform="translate(888.9 -27.5)"/><use href="#wm" transform="translate(802.1 7.5)"/><use href="#wm" transform="translate(888.9 37.0)"/><use href="#wm" transform="translate(802.1 72.0)"/><use href="#wm" transform="translate(888.9 101.5)"/><use href="#wm" transform="translate(802.1 136.5)"/><use href="#wm" transform="translate(888.9 166.0)"/><use href="#wm" transform="translate(802.1 201.0)"/><use href="#wm" transform="translate(888.9 230.5)"/><use href="#wm" transform="translate(802.1 265.5)"/><use href="#wm" transform="translate(888.9 295.0)"/><use href="#wm" transform="translate(802.1 330.0)"/><use href="#wm" transform="translate(888.9 359.5)"/><use href="#wm" transform="translate(802.1 394.5)"/><use href="#wm" transform="translate(888.9 424.0)"/><use href="#wm" transform="translate(802.1 459.0)"/><use href="#wm" transform="translate(888.9 488.5)"/><use href="#wm" transform="translate(802.1 523.5)"/><use href="#wm" transform="translate(888.9 553.0)"/><use href="#wm" transform="translate(802.1 588.0)"/><use href="#wm" transform="translate(888.9 617.5)"/><use href="#wm" transform="translate(802.1 652.5)"/><use href="#wm" transform="translate(888.9 682.0)"/><use href="#wm" transform="translate(802.1 717.0)"/><use href="#wm" transform="translate(888.9 746.5)"/><use href="#wm" transform="translate(802.1 781.5)"/><use href="#wm" transform="translate(888.9 811.0)"/><use href="#wm" transform="translate(802.1 846.0)"/><use href="#wm" transform="translate(888.9 875.5)"/><use href="#wm" transform="translate(802.1 910.5)"/><use href="#wm" transform="translate(1062.5 -33.0)"/><use href="#wm" transform="translate(975.7 2.0)"/><use href="#wm" transform="translate(1062.5 31.5)"/><use href="#wm" transform="translate(975.7 66.5)"/><use href="#wm" transform="translate(1062.5 96.0)"/><use href="#wm" transform="translate(975.7 131.0)"/><use href="#wm" transform="translate(1062.5 160.5)"/><use href="#wm" transform="translate(975.7 195.5)"/><use href="#wm" transform="translate(1062.5 225.0)"/><use href="#wm" transform="translate(975.7 260.0)"/><use href="#wm" transform="translate(1062.5 289.5)"/><use href="#wm" transform="translate(975.7 324.5)"/><use href="#wm" transform="translate(1062.5 354.0)"/><use href="#wm" transform="translate(975.7 389.0)"/><use href="#wm" transform="translate(1062.5 418.5)"/><use href="#wm" transform="translate(975.7 453.5)"/><use href="#wm" transform="translate(1062.5 483.0)"/><use href="#wm" transform="translate(975.7 518.0)"/><use href="#wm" transform="translate(1062.5 547.5)"/><use href="#wm" transform="translate(975.7 582.5)"/><use href="#wm" transform="translate(1062.5 612.0)"/><use href="#wm" transform="translate(975.7 647.0)"/><use href="#wm" transform="translate(1062.5 676.5)"/><use href="#wm" transform="translate(975.7 711.5)"/><use href="#wm" transform="translate(1062.5 741.0)"/><use href="#wm" transform="translate(975.7 776.0)"/><use href="#wm" transform="translate(1062.5 805.5)"/><use href="#wm" transform="translate(975.7 840.5)"/><use href="#wm" transform="translate(1062.5 870.0)"/><use href="#wm" transform="translate(975.7 905.0)"/><use href="#wm" transform="translate(1236.1 -38.5)"/><use href="#wm" transform="translate(1149.3 -3.5)"/><use href="#wm" transform="translate(1236.1 26.0)"/><use href="#wm" transform="translate(1149.3 61.0)"/><use href="#wm" transform="translate(1236.1 90.5)"/><use href="#wm" transform="translate(1149.3 125.5)"/><use href="#wm" transform="translate(1236.1 155.0)"/><use href="#wm" transform="translate(1149.3 190.0)"/><use href="#wm" transform="translate(1236.1 219.5)"/><use href="#wm" transform="translate(1149.3 254.5)"/><use href="#wm" transform="translate(1236.1 284.0)"/><use href="#wm" transform="translate(1149.3 319.0)"/><use href="#wm" transform="translate(1236.1 348.5)"/><use href="#wm" transform="translate(1149.3 383.5)"/><use href="#wm" transform="translate(1236.1 413.0)"/><use href="#wm" transform="translate(1149.3 448.0)"/><use href="#wm" transform="translate(1236.1 477.5)"/><use href="#wm" transform="translate(1149.3 512.5)"/><use href="#wm" transform="translate(1236.1 542.0)"/><use href="#wm" transform="translate(1149.3 577.0)"/><use href="#wm" transform="translate(1236.1 606.5)"/><use href="#wm" transform="translate(1149.3 641.5)"/><use href="#wm" transform="translate(1236.1 671.0)"/><use href="#wm" transform="translate(1149.3 706.0)"/><use href="#wm" transform="translate(1236.1 735.5)"/><use href="#wm" transform="translate(1149.3 770.5)"/><use href="#wm" transform="translate(1236.1 800.0)"/><use href="#wm" transform="translate(1149.3 835.0)"/><use href="#wm" transform="translate(1236.1 864.5)"/><use href="#wm" transform="translate(1149.3 899.5)"/><use href="#wm" transform="translate(1322.9 -9.0)"/><use href="#wm" transform="translate(1409.7 20.5)"/><use href="#wm" transform="translate(1322.9 55.5)"/><use href="#wm" transform="translate(1409.7 85.0)"/><use href="#wm" transform="translate(1322.9 120.0)"/><use href="#wm" transform="translate(1409.7 149.5)"/><use href="#wm" transform="translate(1322.9 184.5)"/><use href="#wm" transform="translate(1409.7 214.0)"/><use href="#wm" transform="translate(1322.9 249.0)"/><use href="#wm" transform="translate(1409.7 278.5)"/><use href="#wm" transform="translate(1322.9 313.5)"/><use href="#wm" transform="translate(1409.7 343.0)"/><use href="#wm" transform="translate(1322.9 378.0)"/><use href="#wm" transform="translate(1409.7 407.5)"/><use href="#wm" transform="translate(1322.9 442.5)"/><use href="#wm" transform="translate(1409.7 472.0)"/><use href="#wm" transform="translate(1322.9 507.0)"/><use href="#wm" transform="translate(1409.7 536.5)"/><use href="#wm" transform="translate(1322.9 571.5)"/><use href="#wm" transform="translate(1409.7 601.0)"/><use href="#wm" transform="translate(1322.9 636.0)"/><use href="#wm" transform="translate(1409.7 665.5)"/><use href="#wm" transform="translate(1322.9 700.5)"/><use href="#wm" transform="translate(1409.7 730.0)"/><use href="#wm" transform="translate(1322.9 765.0)"/><use href="#wm" transform="translate(1409.7 794.5)"/><use href="#wm" transform="translate(1322.9 829.5)"/><use href="#wm" transform="translate(1409.7 859.0)"/><use href="#wm" transform="translate(1322.9 894.0)"/><use href="#wm" transform="translate(1496.5 -14.5)"/><use href="#wm" transform="translate(1583.3 15.0)"/><use href="#wm" transform="translate(1496.5 50.0)"/><use href="#wm" transform="translate(1583.3 79.5)"/><use href="#wm" transform="translate(1496.5 114.5)"/><use href="#wm" transform="translate(1583.3 144.0)"/><use href="#wm" transform="translate(1496.5 179.0)"/><use href="#wm" transform="translate(1583.3 208.5)"/><use href="#wm" transform="translate(1496.5 243.5)"/><use href="#wm" transform="translate(1583.3 273.0)"/><use href="#wm" transform="translate(1496.5 308.0)"/><use href="#wm" transform="translate(1583.3 337.5)"/><use href="#wm" transform="translate(1496.5 372.5)"/><use href="#wm" transform="translate(1583.3 402.0)"/><use href="#wm" transform="translate(1496.5 437.0)"/><use href="#wm" transform="translate(1583.3 466.5)"/><use href="#wm" transform="translate(1496.5 501.5)"/><use href="#wm" transform="translate(1583.3 531.0)"/><use href="#wm" transform="translate(1496.5 566.0)"/><use href="#wm" transform="translate(1583.3 595.5)"/><use href="#wm" transform="translate(1496.5 630.5)"/><use href="#wm" transform="translate(1583.3 660.0)"/><use href="#wm" transform="translate(1496.5 695.0)"/><use href="#wm" transform="translate(1583.3 724.5)"/><use href="#wm" transform="translate(1496.5 759.5)"/><use href="#wm" transform="translate(1583.3 789.0)"/><use href="#wm" transform="translate(1496.5 824.0)"/><use href="#wm" transform="translate(1583.3 853.5)"/><use href="#wm" transform="translate(1496.5 888.5)"/><use href="#wm" transform="translate(1583.3 918.0)"/><use href="#wm" transform="translate(1670.1 -20.0)"/><use href="#wm" transform="translate(1756.9 9.5)"/><use href="#wm" transform="translate(1670.1 44.5)"/><use href="#wm" transform="translate(1756.9 74.0)"/><use href="#wm" transform="translate(1670.1 109.0)"/><use href="#wm" transform="translate(1756.9 138.5)"/><use href="#wm" transform="translate(1670.1 173.5)"/><use href="#wm" transform="translate(1756.9 203.0)"/><use href="#wm" transform="translate(1670.1 238.0)"/><use href="#wm" transform="translate(1756.9 267.5)"/><use href="#wm" transform="translate(1670.1 302.5)"/><use href="#wm" transform="translate(1756.9 332.0)"/><use href="#wm" transform="translate(1670.1 367.0)"/><use href="#wm" transform="translate(1756.9 396.5)"/><use href="#wm" transform="translate(1670.1 431.5)"/><use href="#wm" transform="translate(1756.9 461.0)"/><use href="#wm" transform="translate(1670.1 496.0)"/><use href="#wm" transform="translate(1756.9 525.5)"/><use href="#wm" transform="translate(1670.1 560.5)"/><use href="#wm" transform="translate(1756.9 590.0)"/><use href="#wm" transform="translate(1670.1 625.0)"/><use href="#wm" transform="translate(1756.9 654.5)"/><use href="#wm" transform="translate(1670.1 689.5)"/><use href="#wm" transform="translate(1756.9 719.0)"/><use href="#wm" transform="translate(1670.1 754.0)"/><use href="#wm" transform="translate(1756.9 783.5)"/><use href="#wm" transform="translate(1670.1 818.5)"/><use href="#wm" transform="translate(1756.9 848.0)"/><use href="#wm" transform="translate(1670.1 883.0)"/><use href="#wm" transform="translate(1756.9 912.5)"/><use href="#wm" transform="translate(1843.7 -25.5)"/><use href="#wm" transform="translate(1930.5 4.0)"/><use href="#wm" transform="translate(1843.7 39.0)"/><use href="#wm" transform="translate(1930.5 68.5)"/><use href="#wm" transform="translate(1843.7 103.5)"/><use href="#wm" transform="translate(1930.5 133.0)"/><use href="#wm" transform="translate(1843.7 168.0)"/><use href="#wm" transform="translate(1930.5 197.5)"/><use href="#wm" transform="translate(1843.7 232.5)"/><use href="#wm" transform="translate(1930.5 262.0)"/><use href="#wm" transform="translate(1843.7 297.0)"/><use href="#wm" transform="translate(1930.5 326.5)"/><use href="#wm" transform="translate(1843.7 361.5)"/><use href="#wm" transform="translate(1930.5 391.0)"/><use href="#wm" transform="translate(1843.7 426.0)"/><use href="#wm" transform="translate(1930.5 455.5)"/><use href="#wm" transform="translate(1843.7 490.5)"/><use href="#wm" transform="translate(1930.5 520.0)"/><use href="#wm" transform="translate(1843.7 555.0)"/><use href="#wm" transform="translate(1930.5 584.5)"/><use href="#wm" transform="translate(1843.7 619.5)"/><use href="#wm" transform="translate(1930.5 649.0)"/><use href="#wm" transform="translate(1843.7 684.0)"/><use href="#wm" transform="translate(1930.5 713.5)"/><use href="#wm" transform="translate(1843.7 748.5)"/><use href="#wm" transform="translate(1930.5 778.0)"/><use href="#wm" transform="translate(1843.7 813.0)"/><use href="#wm" transform="translate(1930.5 842.5)"/><use href="#wm" transform="translate(1843.7 877.5)"/><use href="#wm" transform="translate(1930.5 907.0)"/>
</svg>
<!-- /WATERMARK -->
</body></html>
